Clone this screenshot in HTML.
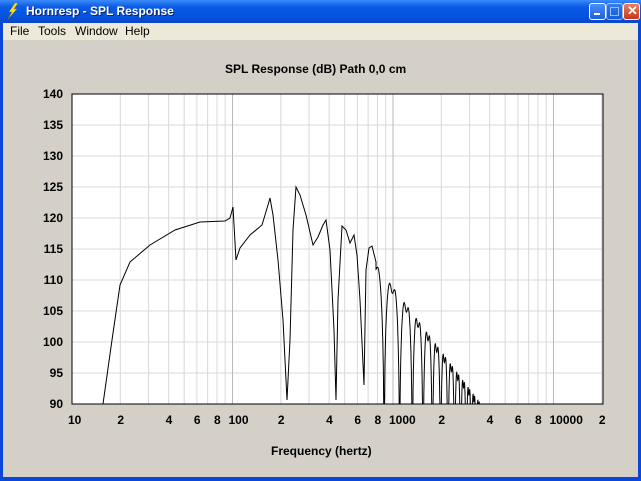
<!DOCTYPE html>
<html><head><style>
body{margin:0;width:641px;height:481px;overflow:hidden;background:#0a46d8;font-family:"Liberation Sans",sans-serif;}
.win{position:absolute;left:0;top:0;width:641px;height:481px;}
.title{position:absolute;left:0;top:0;width:641px;height:23px;background:linear-gradient(#3a8cf8,#0a5ae6 30%,#0554e0 70%,#0a46c8);}
.title span{position:absolute;left:26px;top:4px;color:#fff;font-weight:bold;font-size:12px;text-shadow:1px 1px #0a246a;}
.btn{position:absolute;top:3px;width:15px;height:15px;border:1px solid #fff;border-radius:3px;background:linear-gradient(#4a8cf8,#2060e0);}
.menu{position:absolute;left:3px;top:23px;width:635px;height:17px;background:#ece9d8;font-size:12px;}
.menu span{position:absolute;top:1px;}
.client{position:absolute;left:3px;top:40px;width:635px;height:437px;background:#d4d0c8;}
</style></head><body><div class="win">
<div class="title"><svg style="position:absolute;left:6px;top:3px" width="14" height="16"><path d="M9 0 L3 9 L6 9 L2 16 L11 6 L8 6 L12 0Z" fill="#f8e020" stroke="#a08000" stroke-width="0.5"/></svg><span>Hornresp - SPL Response</span>
<div class="btn" style="left:589px"><div style="position:absolute;left:4px;top:9px;width:6px;height:2px;background:#fff"></div></div>
<div class="btn" style="left:606px;opacity:.6"><div style="position:absolute;left:3px;top:3px;width:7px;height:7px;border:1px solid #fff"></div></div>
<div class="btn" style="left:623px;background:linear-gradient(#e88060,#c83818)"><span style="left:3px;top:-1px;font-size:13px;text-shadow:none">✕</span></div>
</div>
<div class="menu"><span style="left:7px">File</span><span style="left:35px">Tools</span><span style="left:72px">Window</span><span style="left:122px">Help</span></div>
<div class="client"></div>
<svg style="position:absolute;left:0;top:0" width="641" height="481" font-family="Liberation Sans, sans-serif" font-weight="bold" font-size="12">
<rect x="72" y="94" width="531" height="310" fill="#fff" stroke="#000"/>
<g id="grid" stroke="#d8d8d8" stroke-width="1"></g>
<rect x="72" y="94" width="531" height="310" fill="none" stroke="#000"/>
<path id="curve" fill="none" stroke="#000" stroke-width="1"/>
<text x="225" y="73">SPL Response (dB)   Path 0,0 cm</text>
<text x="271" y="455">Frequency (hertz)</text>
<g id="lab"></g>
</svg>
</div>
<script>
var X=f=>72+160.5*Math.log10(f/10),Y=d=>404-(d-90)*6.2;
var g=document.getElementById('grid'),lab=document.getElementById('lab'),s='',l='';
for(var d=95;d<140;d+=5)s+='<line x1="72" x2="603" y1="'+Y(d)+'" y2="'+Y(d)+'"/>';
for(var d=90;d<=140;d+=5)l+='<text x="63" y="'+(Y(d)+4)+'" text-anchor="end">'+d+'</text>';
[10,100,1000,10000].forEach(function(b){for(var k=1;k<=9;k++){var f=b*k;if(f>20000)break;var x=X(f);if(x>72&&x<603)s+='<line x1="'+x+'" x2="'+x+'" y1="94" y2="404"'+(k==1?' stroke="#b8b8b8"':'')+'/>';}});
g.innerHTML=s;
var labs=[[10,'10'],[20,'2'],[40,'4'],[60,'6'],[80,'8'],[100,'100'],[200,'2'],[400,'4'],[600,'6'],[800,'8'],[1000,'1000'],[2000,'2'],[4000,'4'],[6000,'6'],[8000,'8'],[10000,'10000'],[20000,'2']];
labs.forEach(function(a){var x=X(a[0]);l+='<text x="'+(a[1].length>1?x-4:x-3)+'" y="424">'+a[1]+'</text>';});
lab.innerHTML=l;
var pts=[[103,404],[112,340],[120,285],[130,262],[150,245],[175,230],[200,222],[225,221],[230,218],[233,207],[236,260],[240,248],[250,235],[262,225],[268,205],[270,198],[273,215],[278,260],[283,320],[287,400],[290,340],[293,230],[296,187],[300,195],[306,215],[313,245],[318,237],[323,225],[326,220],[330,250],[334,330],[336,400],[338,300],[342,226],[346,230],[350,243],[354,235],[357,255],[360,300],[364,385],[366,270],[369,248],[372,246],[376,262]];
var p='M'+pts.map(a=>a.join(',')).join('L');
for(var f=700;f<4000;f+=1.5){var x=X(f);if(x<376)continue;var ey=245+(x-370)*1.33;var sn=Math.abs(Math.sin(Math.PI*f/220));var y=ey-(20*Math.log10(Math.max(sn,1e-4))-3*Math.pow(sn,10))*6.2;if(y>404)y=404;p+='L'+x.toFixed(1)+','+y.toFixed(1);if(x>486)break;}
p+='L487,404';
document.getElementById('curve').setAttribute('d',p);
</script>
</body></html>
